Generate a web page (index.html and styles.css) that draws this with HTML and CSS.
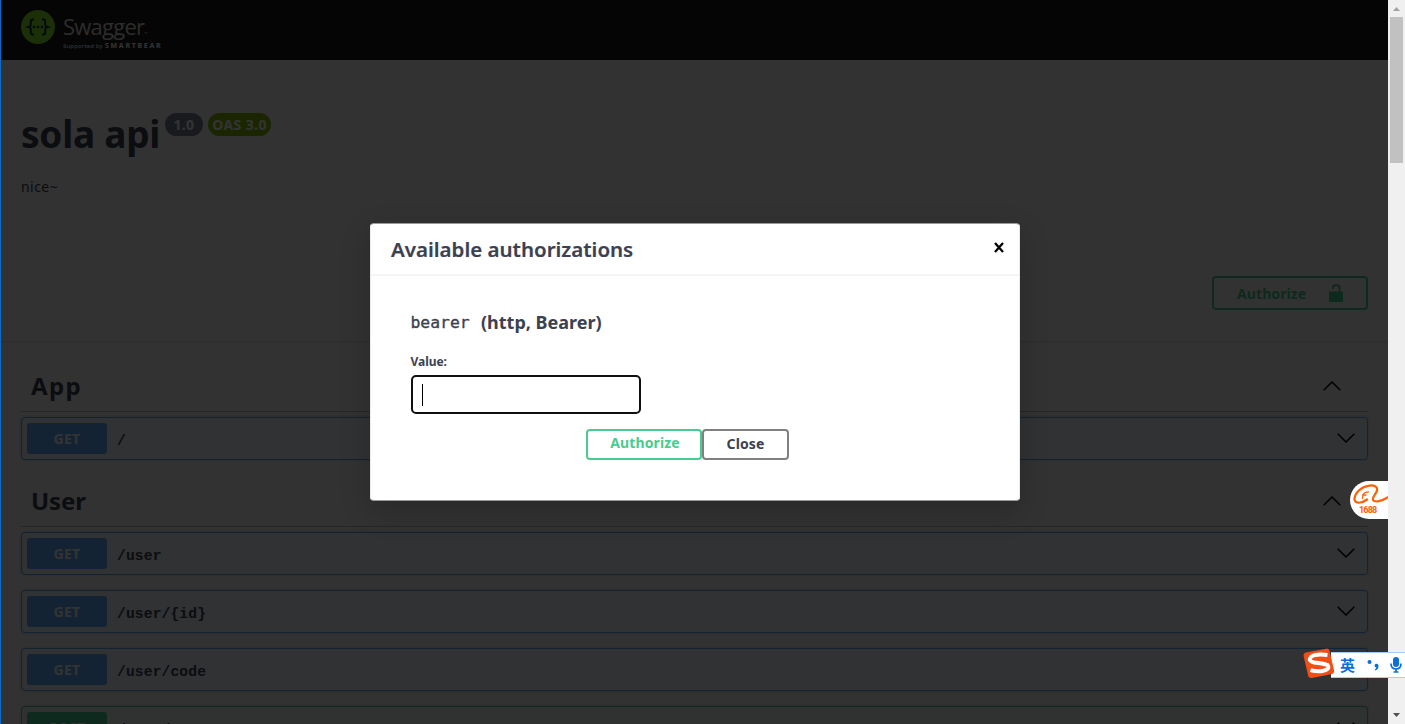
FILE: index.html
```html
<!DOCTYPE html>
<html lang="en">
<head>
<meta charset="utf-8">
<title>Swagger UI</title>
<link rel="stylesheet" href="styles.css">
</head>
<body>
<div class="window">
  <div class="page">
    <header class="topbar">
      <svg class="logo-mark" viewBox="0 0 34 34"><circle cx="17" cy="17" r="17" fill="#85ea2d"/><g fill="none" stroke="#173647" stroke-width="2"><path d="M13 9.500h-1.200q-2 0-2 2v2.700q0 2.200-2.300 2.800 2.300.6 2.300 2.800v2.700q0 2 2 2H13M21 9.500h1.200q2 0 2 2v2.700q0 2.200 2.300 2.800-2.300.6-2.300 2.800v2.700q0 2-2 2H21"/></g><g fill="#173647"><circle cx="13" cy="17" r="1.300"/><circle cx="17" cy="17" r="1.300"/><circle cx="21" cy="17" r="1.300"/></g></svg>
      <div class="logo-words">
        <div class="logo-name">Swagger<span class="tm">™</span></div>
        <div class="logo-sub"><span class="supported">Supported by</span><span class="smartbear">SMARTBEAR</span></div>
      </div>
    </header>
    <section class="info">
      <div class="title-row"><h1>sola api</h1><span class="badge version">1.0</span><span class="badge oas">OAS 3.0</span></div>
      <p class="description">nice~</p>
    </section>
    <section class="schemes">
      <button class="btn-auth"><span>Authorize</span><svg class="lock" viewBox="0 0 14 18"><path d="M1 7.500h8.600V4.500Q9.600 2 7.300 2T5 4.500V5H3V4.200Q3 0 7.300 0T11.600 4.200V7.500H13q1 0 1 1V17q0 1-1 1H1q-1 0-1-1V8.500q0-1 1-1z" fill="#49cc90"/></svg></button>
    </section>
    <main class="tags">
      <section class="tag">
        <h2 class="tag-head"><span>App</span><svg class="chev" viewBox="0 0 18 10"><path d="M.7 9.300 9 1l8.300 8.300"/></svg></h2>
        <div class="op get"><span class="method">GET</span><span class="path">/</span><svg class="chev" viewBox="0 0 18 10"><path d="M.7.7 9 9 17.300.7"/></svg></div>
      </section>
      <section class="tag">
        <h2 class="tag-head"><span>User</span><svg class="chev" viewBox="0 0 18 10"><path d="M.7 9.300 9 1l8.300 8.300"/></svg></h2>
        <div class="op get"><span class="method">GET</span><span class="path">/user</span><svg class="chev" viewBox="0 0 18 10"><path d="M.7.7 9 9 17.300.7"/></svg></div>
        <div class="op get"><span class="method">GET</span><span class="path">/user/{id}</span><svg class="chev" viewBox="0 0 18 10"><path d="M.7.7 9 9 17.300.7"/></svg></div>
        <div class="op get"><span class="method">GET</span><span class="path">/user/code</span><svg class="chev" viewBox="0 0 18 10"><path d="M.7.7 9 9 17.300.7"/></svg></div>
        <div class="op post"><span class="method">POST</span><span class="path">/user/sms</span><svg class="chev" viewBox="0 0 18 10"><path d="M.7.7 9 9 17.300.7"/></svg></div>
      </section>
    </main>
  </div>
  <div class="scrollbar">
    <svg class="arrow" viewBox="0 0 17 17"><path d="M5 11h7L8.500 7z" fill="#a3a3a3"/></svg>
    <div class="thumb"></div>
    <svg class="arrow arrow-down" viewBox="0 0 17 17"><path d="M5 6h7L8.500 10z" fill="#505050"/></svg>
  </div>
</div>

<div class="backdrop"></div>
<div class="edge"></div>

<div class="modal">
  <div class="modal-head"><h3>Available authorizations</h3><svg class="close" viewBox="0 0 10 11"><path d="M1 1l8 9M9 1 1 10" stroke="#000" stroke-width="2.300"/></svg></div>
  <div class="modal-body">
    <h4><code>bearer</code><span class="kind">(http, Bearer)</span></h4>
    <label class="value-label">Value:</label>
    <div class="field"><span class="caret"></span></div>
    <div class="actions"><button class="btn authorize">Authorize</button><button class="btn done">Close</button></div>
  </div>
</div>

<div class="shop-pin">
  <svg viewBox="0 0 38 38"><g fill="none" stroke="#ff6000" stroke-linecap="round" stroke-linejoin="round"><path stroke-width="2.200" d="M17 18.500C11 23 4 23 4.500 17.500 5 12 11 6 18 4.800 24 3.500 28 5.500 27 9.500 26.300 13 22 16 23 19 24.500 22 32 20 37.500 16.500"/><path stroke-width="1.300" d="M18.500 10.800C14 11 12.500 12.500 12.500 17.500M12.500 14H16"/></g></svg>
  <span class="shop-text">1688</span>
</div>

<div class="ime">
  <svg class="ime-logo" viewBox="0 0 34 32"><path d="M3 4.500 23 .7q2.800-.5 3.500 2L31 22q.5 3-2 4L9 30q-3 .5-3.800-2L.6 8Q.2 5.200 3 4.500z" fill="#f04e16"/><path d="M24.500 7Q12 5.500 8 9 4.500 13 11 14.500q9 .8 13.500 2.500 3 4.500-5 6-6 1-12-.8" fill="none" stroke="#fff" stroke-width="4"/></svg>
  <div class="ime-bar">
    <span class="ime-lang">英</span>
    <svg class="ime-punct" viewBox="0 0 12 12"><circle cx="2.500" cy="3" r="2" fill="#0a6fdc"/><path d="M7.500 6.500a2 2 0 1 1 4 .5q0 3-3 4.500l-.8-1Q9.300 9.700 9.300 8.600 7.700 8.300 7.500 6.500z" fill="#0a6fdc"/></svg>
    <svg class="ime-mic" viewBox="0 0 12 16"><rect x="3" y="0" width="6" height="10" rx="3" fill="#0a6fdc"/><path d="M1 6.500q0 5.500 5 5.500t5-5.500M6 12v3M3.500 15h5" fill="none" stroke="#0a6fdc" stroke-width="1.700"/></svg>
  </div>
</div>
</body>
</html>
```
FILE: styles.css
```css
* { box-sizing: border-box; }
body { margin: 0; height: 724px; overflow: hidden; position: relative; background: #fafafa; font-family: "Noto Sans", "Open Sans", sans-serif; color: #3b4151; }
h1, h2, h3, h4, p { margin: 0; }
button { font-family: inherit; background: transparent; margin: 0; }
.window { display: flex; height: 724px; }
.page { flex: 1; height: 724px; overflow: hidden; }

.topbar { height: 60px; background: #1b1b1b; padding: 10px 0 0 21px; display: flex; gap: 8px; }
.logo-mark { width: 34px; height: 34px; }
.logo-name { height: 32px; font: 400 22px/32px "Open Sans", sans-serif; letter-spacing: -.75px; color: #ddd; }
.tm { font-size: 4px; letter-spacing: 0; }
.logo-sub { display: flex; gap: 2px; height: 8px; line-height: 8px; color: #fff; }
.supported { width: 40px; font-size: 6px; letter-spacing: .15px; white-space: nowrap; }
.smartbear { font-size: 7px; font-weight: 700; letter-spacing: 1.700px; }

.info { height: 188px; padding: 50px 0 0 21px; }
.title-row { display: flex; height: 52px; align-items: flex-start; }
h1 { font-size: 37px; line-height: 48px; width: 144px; letter-spacing: -.25px; white-space: nowrap; }
.badge { height: 23px; margin-top: 3px; border-radius: 12px; color: #fff; font-size: 14px; font-weight: 700; line-height: 23px; text-align: center; }
.version { width: 38px; background: #7d8492; letter-spacing: .3px; }
.oas { width: 63px; margin-left: 5px; background: #89bf04; letter-spacing: .4px; }
.description { margin-top: 15px; font-size: 14px; line-height: 20px; letter-spacing: .45px; }

.schemes { height: 93px; padding: 28px 20px 0 0; display: flex; justify-content: flex-end; align-items: flex-start; box-shadow: 0 1px 2px rgba(0,0,0,.15); }
.btn-auth { width: 156px; height: 34px; border: 2px solid #49cc90; border-radius: 4px; padding: 0 23px 0 23px; display: flex; justify-content: space-between; align-items: center; color: #49cc90; font-size: 14px; font-weight: 700; letter-spacing: .1px; }
.lock { width: 14px; height: 18px; }

.tags { padding: 19px 20px 0 21px; }
.tag { margin-bottom: 15px; }
.tag-head { height: 52px; margin-bottom: 5px; padding: 0 27px 0 10px; display: flex; justify-content: space-between; align-items: center; border-bottom: 1px solid rgba(59,65,81,.3); font-size: 24px; letter-spacing: -.1px; }
.tag:first-child .tag-head { letter-spacing: 1.300px; }
.chev { width: 18px; height: 10px; fill: none; stroke: #000; stroke-width: 1.5; }
.op { height: 43px; margin-bottom: 15px; padding: 0 12px 0 5px; display: flex; align-items: center; border: 1px solid; border-radius: 4px; box-shadow: 0 0 3px rgba(0,0,0,.19); }
.op .chev { margin: 0 0 2px auto; }
.get { border-color: #61affe; background: #eff7ff; }
.post { border-color: #49cc90; background: #e8f8f1; }
.method { width: 80px; height: 31px; border-radius: 3px; background: #61affe; color: #fff; font-size: 14px; font-weight: 700; line-height: 31px; text-align: center; }
.get .method { letter-spacing: .3px; }
.post .method { background: #49cc90; }
.path { margin: 4px 0 0 10px; font: 700 14.600px/20px "Liberation Mono", monospace; letter-spacing: .15px; }

.scrollbar { width: 17px; background: #f0f0f0; display: flex; flex-direction: column; align-items: center; position: relative; z-index: 3; }
.arrow { width: 17px; height: 17px; }
.thumb { width: 13px; height: 146px; background: #c1c1c1; }
.arrow-down { margin-top: auto; }
.backdrop { position: absolute; inset: 0 17px 0 0; background: rgba(0,0,0,.8); z-index: 1; }
.edge { position: absolute; left: 0; top: 0; width: 1px; height: 724px; background: #0a6cc4; z-index: 2; }

.modal { position: absolute; left: 370px; top: 223px; width: 650px; height: 278px; z-index: 4; border: 1px solid #ebebeb; border-top-color: #999; border-bottom-color: #999; border-radius: 4px; background: #fff; box-shadow: 0 10px 30px rgba(0,0,0,.2); }
.modal-head { height: 52px; padding: 0 15px 0 20px; display: flex; justify-content: space-between; align-items: center; border-bottom: 2px solid #f4f4f4; }
h3 { font-size: 20.500px; font-weight: 600; white-space: nowrap; -webkit-text-stroke: .2px #3b4151; }
.close { width: 10px; height: 11px; margin-bottom: 3px; }
.modal-body { padding: 32px 0 0 39px; }
h4 { display: flex; height: 28px; align-items: center; font-size: 18px; white-space: nowrap; }
h4 code { width: 71px; padding: 2px 0 0 .5px; font: 500 16.400px/24px "DejaVu Sans Mono", monospace; -webkit-text-stroke: .35px #3b4151; }
.value-label { display: block; margin: 16px 0 0 .5px; font-size: 12px; font-weight: 700; line-height: 20px; letter-spacing: -.05px; }
.field { width: 230px; height: 39px; margin: 3px 0 0 1px; border: 2px solid #101010; border-radius: 5px; padding: 7px 9px; }
.caret { display: block; width: 1px; height: 22px; background: #000; }
.actions { display: flex; margin: 15px 0 0 176px; }
.btn { height: 31px; border: 2px solid; border-radius: 4px; padding: 0; font-size: 14px; font-weight: 700; line-height: 22px; }
.authorize { width: 116px; border-color: #49cc90; color: #49cc90; padding: 0 0 3px 2px; letter-spacing: .1px; }
.done { width: 87px; border-color: #808080; color: #3b4151; padding-bottom: 1px; letter-spacing: .1px; }

.shop-pin { position: absolute; left: 1350px; top: 481px; width: 38px; height: 38px; z-index: 5; border-radius: 19px 0 0 19px; background: #fff; overflow: hidden; }
.shop-pin svg { display: block; width: 38px; height: 38px; }
.shop-text { position: absolute; left: 9px; top: 24px; color: #ff6000; font: 700 9px/11px "Roboto", sans-serif; letter-spacing: -.8px; }
.ime { position: absolute; left: 1303px; top: 648px; width: 102px; height: 32px; z-index: 6; display: flex; }
.ime-logo { width: 34px; height: 32px; position: relative; z-index: 1; }
.ime-bar { flex: 1; height: 26px; margin: 4px 0 0 -6px; padding-left: 9px; display: flex; align-items: center; background: #fff; border: 1px solid #a9c9ee; border-width: 1px 0; }
.ime-lang { width: 27px; color: #0a6fdc; font: 700 15px/24px "Noto Sans CJK SC", sans-serif; }
.ime-punct { width: 12px; height: 12px; margin-right: 11px; }
.ime-mic { width: 12px; height: 16px; }
```
